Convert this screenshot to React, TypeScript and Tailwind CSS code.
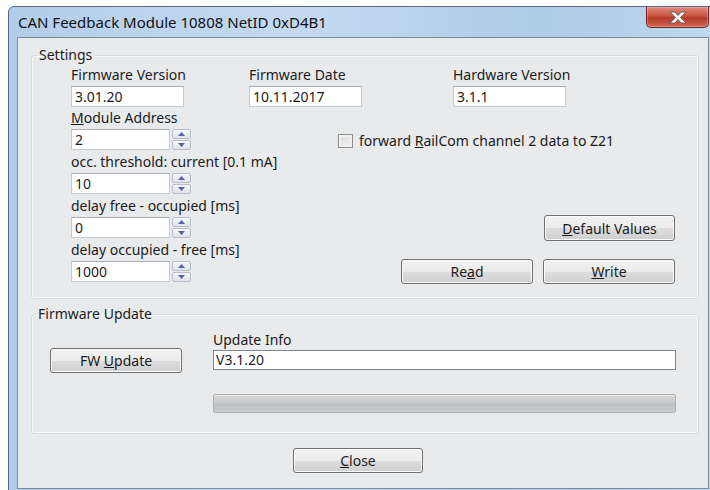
import React from "react";

type FieldProps = {
  label: React.ReactNode;
  value: string;
};

const inputCls =
  "h-[21px] border border-[#c5c9d0] border-t-[#abadb3] bg-white pl-[3px] text-[14px] leading-[19px] text-[#1c1c1c]";

const btnCls =
  "flex items-center justify-center rounded-[3px] border border-[#707070] bg-[linear-gradient(#f2f2f2_0%,#ebebeb_50%,#dddddd_51%,#cfcfcf_100%)] text-[14px] text-[#1c1c1c] shadow-[inset_0_0_0_1px_#fbfbfb]";

const Arrow: React.FC<{ up?: boolean }> = ({ up }) => (
  <svg width="7" height="4" viewBox="0 0 7 4">
    <path d={up ? "M0 4 L3.5 0 L7 4 Z" : "M0 0 L3.5 4 L7 0 Z"} fill="#4f64a0" />
  </svg>
);

const Field: React.FC<FieldProps> = ({ label, value }) => (
  <div className="flex flex-col">
    <span className="h-[16px] text-[14px] leading-[16px]">{label}</span>
    <div className={`${inputCls} mt-[3px] w-[113px]`}>{value}</div>
  </div>
);

const SpinField: React.FC<FieldProps> = ({ label, value }) => (
  <div className="flex flex-col">
    <span className="h-[16px] text-[14px] leading-[16px]">{label}</span>
    <div className="mt-[3px] flex gap-[2px]">
      <div className={`${inputCls} w-[99px]`}>{value}</div>
      <div className="flex w-[19px] flex-col gap-px">
        <div className="flex h-[10px] items-center justify-center rounded-[2px] border border-[#b7bdc7] bg-[linear-gradient(#f6f7f9,#dde2e8)]">
          <Arrow up />
        </div>
        <div className="flex h-[10px] items-center justify-center rounded-[2px] border border-[#b7bdc7] bg-[linear-gradient(#f6f7f9,#dde2e8)]">
          <Arrow />
        </div>
      </div>
    </div>
  </div>
);

const App: React.FC = () => {
  return (
    <div className="h-[490px] w-[710px] overflow-hidden bg-white pl-[8px] pt-[6px] font-['Noto_Sans','DejaVu_Sans',sans-serif] text-[#1c1c1c]">
      <div className="flex h-[492px] w-[710px] flex-col rounded-t-[6px] border border-[#58697e] bg-[linear-gradient(90deg,#b2cdea,#c4daf1_40%,#aecbea_75%,#c0d7ef)]">
        {/* title bar */}
        <div className="flex h-[30px] shrink-0 items-start">
          <span className="pl-[9px] pt-[6px] text-[15px] leading-[18px] text-[#111]">
            CAN Feedback Module 10808 NetID 0xD4B1
          </span>
          <div className="ml-auto mr-[8px] flex h-[21px] w-[63px] items-center justify-center rounded-b-[5px] border border-t-0 border-[#6f2720] bg-[linear-gradient(#e08b7e,#c9523f_45%,#b23a28_55%,#cf6a52)] shadow-[inset_0_0_0_1px_rgba(255,255,255,0.25)]">
            <svg width="20" height="13" viewBox="0 0 20 13">
              <path
                d="M2 1 H7 L10 4.5 L13 1 H18 L12.6 6.5 L18 12 H13 L10 8.5 L7 12 H2 L7.4 6.5 Z"
                fill="#f4f4f4"
                stroke="#5b5b5b"
                strokeWidth="0.9"
                strokeLinejoin="round"
              />
            </svg>
          </div>
        </div>

        {/* client area */}
        <div className="ml-[8px] flex h-[452px] w-[692px] flex-col border border-[#7d8c9c] bg-[#e9eaec]">
          <fieldset className="ml-[13px] mt-[9px] w-[668px] rounded-[3px] border border-[#d3dbe2] pb-[14px] pr-[23px] pt-[4px] shadow-[inset_0_0_0_1px_#f7f8f9]">
            <legend className="ml-[5px] px-[2px] text-[14px] leading-[16px]">Settings</legend>
            <div className="flex pl-[39px]">
              <div className="w-[178px]">
                <Field label="Firmware Version" value="3.01.20" />
              </div>
              <div className="w-[204px]">
                <Field label="Firmware Date" value="10.11.2017" />
              </div>
              <Field label="Hardware Version" value="3.1.1" />
            </div>
            <div className="mt-[3px] flex pl-[39px]">
              <div className="flex w-[267px] flex-col gap-[4px]">
                <SpinField
                  label={
                    <>
                      <span className="underline">M</span>odule Address
                    </>
                  }
                  value="2"
                />
                <SpinField label="occ. threshold: current [0.1 mA]" value="10" />
                <SpinField label="delay free - occupied [ms]" value="0" />
                <SpinField label="delay occupied - free [ms]" value="1000" />
              </div>
              <div className="flex flex-1 flex-col">
                <div className="mt-[23px] flex h-[16px] items-center">
                  <div className="h-[14px] w-[15px] border border-[#8e8f8f] bg-[linear-gradient(135deg,#dcdcdc,#f4f4f4)] shadow-[inset_0_0_0_2px_#f1f1f1]" />
                  <span className="ml-[6px] text-[14px] leading-[16px]">
                    forward <span className="underline">R</span>ailCom channel 2 data to Z21
                  </span>
                </div>
                <div className="mt-[66px] flex justify-end">
                  <button className={`${btnCls} h-[26px] w-[131px]`}>
                    <span>
                      <span className="underline">D</span>efault Values
                    </span>
                  </button>
                </div>
                <div className="mt-[18px] flex justify-end gap-[10px]">
                  <button className={`${btnCls} h-[25px] w-[132px]`}>
                    <span>
                      Re<span className="underline">a</span>d
                    </span>
                  </button>
                  <button className={`${btnCls} h-[25px] w-[132px]`}>
                    <span>
                      <span className="underline">W</span>rite
                    </span>
                  </button>
                </div>
              </div>
            </div>
          </fieldset>

          <fieldset className="ml-[13px] mt-[7px] w-[668px] rounded-[3px] border border-[#d3dbe2] pb-[20px] shadow-[inset_0_0_0_1px_#f7f8f9]">
            <legend className="ml-[5px] px-[1px] text-[14px] leading-[16px]">Firmware Update</legend>
            <div className="flex">
              <button className={`${btnCls} ml-[18px] mt-[26px] h-[25px] w-[132px]`}>
                <span>
                  FW <span className="underline">U</span>pdate
                </span>
              </button>
              <div className="ml-[31px] mt-[10px] flex w-[463px] flex-col">
                <span className="h-[16px] text-[14px] leading-[16px]">Update Info</span>
                <div className="mt-[2px] h-[20px] border border-[#80868e] bg-white pl-[2px] text-[14px] leading-[18px]">
                  V3.1.20
                </div>
                <div className="mt-[24px] h-[19px] rounded-[2px] border border-[#b0b0b0] bg-[linear-gradient(#d6d6d6,#c8c9ca_45%,#bfc0c1_55%,#c9cacb)] shadow-[inset_0_1px_0_#ededed]" />
              </div>
            </div>
          </fieldset>

          <button className={`${btnCls} ml-[275px] mt-[14px] h-[25px] w-[130px] border-[#3c7fb1] shadow-[inset_0_0_0_1px_#bfe3f7]`}>
            <span>
              <span className="underline">C</span>lose
            </span>
          </button>
        </div>
      </div>
    </div>
  );
};

export default App;
